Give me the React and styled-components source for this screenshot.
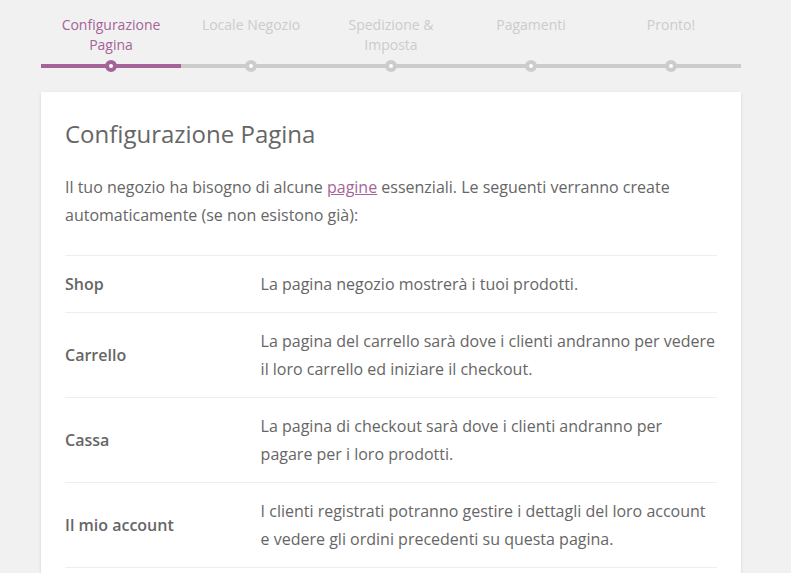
import React from "react";
import styled, { createGlobalStyle } from "styled-components";

const Global = createGlobalStyle`
  html, body { margin: 0; padding: 0; background: #f1f1f1; }
  body { font-family: "Open Sans", "Noto Sans", sans-serif; color: #666; }
  * { box-sizing: content-box; }
`;

const Page = styled.div`
  width: 700px;
  padding: 15px 0 0 41px;
`;

const Steps = styled.ol`
  display: flex;
  list-style: none;
  margin: 0;
  padding: 0 0 24px;
  color: #ccc;
`;

const Step = styled.li`
  position: relative;
  width: 20%;
  margin: 0;
  padding: 0 0 calc(0.8em - 1px);
  text-align: center;
  font-size: 14px;
  line-height: 1.4em;
  color: ${(p) => (p.$active ? "#a46497" : "#ccc")};
  border-bottom: 4px solid ${(p) => (p.$active ? "#a46497" : "#ccc")};

  &::before {
    content: "";
    position: absolute;
    left: 50%;
    bottom: 0;
    width: 4px;
    height: 4px;
    margin-left: -6px;
    margin-bottom: -8px;
    border: 4px solid ${(p) => (p.$active ? "#a46497" : "#ccc")};
    border-radius: 100%;
    background: #fff;
  }
`;

const Label = styled.span`
  display: inline-block;
  padding: 0 16px;
`;

const Card = styled.div`
  background: #fff;
  box-shadow: 0 1px 3px rgba(0, 0, 0, 0.13);
  padding: 24px 24px 24px;
`;

const Title = styled.h1`
  margin: 2px 0 23px;
  font-size: 24px;
  font-weight: 400;
  line-height: 32px;
  color: #666;
`;

const Intro = styled.p`
  margin: 0 0 26px;
  font-size: 16px;
  line-height: 28px;
  color: #666;
`;

const Link = styled.a`
  color: #a46497;
  text-decoration: underline;
`;

const Table = styled.table`
  width: 100%;
  border-spacing: 0;
  border-collapse: separate;
`;

const Head = styled.th`
  width: 30%;
  padding: 14px 0;
  border-top: 1px solid #eee;
  text-align: left;
  vertical-align: middle;
  font-size: 16px;
  font-weight: 600;
  line-height: 28px;
  color: #666;
`;

const Desc = styled.td`
  padding: 14px 0;
  border-top: 1px solid #eee;
  vertical-align: middle;
  font-size: 16px;
  line-height: 28px;
  color: #666;
`;

const LastRow = styled.tr`
  & > th, & > td { border-bottom: 1px solid #eee; }
`;

const steps = [
  "Configurazione Pagina",
  "Locale Negozio",
  "Spedizione & Imposta",
  "Pagamenti",
  "Pronto!",
];

const pages = [
  ["Shop", "La pagina negozio mostrerà i tuoi prodotti."],
  ["Carrello", "La pagina del carrello sarà dove i clienti andranno per vedere il loro carrello ed iniziare il checkout."],
  ["Cassa", "La pagina di checkout sarà dove i clienti andranno per pagare per i loro prodotti."],
  ["Il mio account", "I clienti registrati potranno gestire i dettagli del loro account e vedere gli ordini precedenti su questa pagina."],
];

export default function App() {
  return (
    <>
      <Global />
      <Page>
        <Steps>
          {steps.map((s, i) => (
            <Step key={s} $active={i === 0}>
              <Label>{s}</Label>
            </Step>
          ))}
        </Steps>
        <Card>
          <Title>Configurazione Pagina</Title>
          <Intro>
            Il tuo negozio ha bisogno di alcune <Link href="#">pagine</Link> essenziali. Le seguenti verranno create automaticamente (se non esistono già):
          </Intro>
          <Table>
            <tbody>
              {pages.map(([h, d], i) => {
                const Row = i === pages.length - 1 ? LastRow : "tr";
                return (
                  <Row key={h}>
                    <Head>{h}</Head>
                    <Desc>{d}</Desc>
                  </Row>
                );
              })}
            </tbody>
          </Table>
        </Card>
      </Page>
    </>
  );
}
